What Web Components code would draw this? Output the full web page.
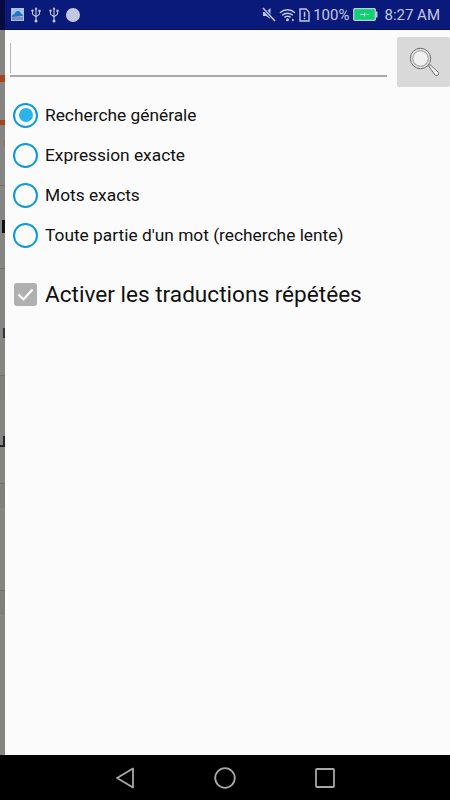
<!DOCTYPE html>
<html lang="fr">
<head>
<meta charset="utf-8">
<title>Recherche</title>
<style>
  html, body { margin: 0; padding: 0; }
  body { font-family: Roboto, "Noto Sans", sans-serif; }
</style>
</head>
<body>
<search-app>
  <radio-option checked>Recherche générale</radio-option>
  <radio-option>Expression exacte</radio-option>
  <radio-option>Mots exacts</radio-option>
  <radio-option>Toute partie d'un mot (recherche lente)</radio-option>
  <check-option slot="after" checked>Activer les traductions répétées</check-option>
</search-app>

<script>
// top bar with the android notification icons
class StatusBar extends HTMLElement {
  constructor() {
    super();
    const usb = `
      <svg class="usb" width="10" height="16" viewBox="0 0 10 16" fill="none" stroke="#c3c8e2" stroke-width="1.100">
        <path d="M5 1v14M1.500 4.500v2.200c0 1.300 3.500 2.300 3.500 3.600M8.500 4.500v2.200c0 1.300-3.500 2.300-3.500 3.600"/>
        <path d="M5 0 3.600 2.400h2.800z" fill="#c3c8e2" stroke="none"/>
        <circle cx="5" cy="14" r="1.500" fill="#c3c8e2" stroke="none"/>
        <circle cx="1.500" cy="3.800" r="1.200" fill="#c3c8e2" stroke="none"/>
        <rect x="7.400" y="2.700" width="2.200" height="2.200" fill="#c3c8e2" stroke="none"/>
      </svg>`;
    this.attachShadow({ mode: 'open' }).innerHTML = `
      <style>
        :host {
          display: flex;
          align-items: center;
          height: 29px;
          background: #0a1a7a;
          border-bottom: 1px solid #07125a;
          color: #c3c8e2;
          font-family: Roboto, sans-serif;
          font-size: 15px;
          flex: none;
        }
        .edge { width: 5px; align-self: stretch; background: #050d40; margin-bottom: -1px; }
        .left { display: flex; align-items: center; padding-left: 6px; }
        .usb { margin-left: 7px; }
        .usb + .usb { margin-left: 8px; }
        .dot { width: 14px; height: 14px; border-radius: 50%; background: #c3c8e2; margin-left: 7px; }
        .right { display: flex; align-items: center; margin-left: auto; padding-right: 10px; }
        .pct { margin-left: 3px; }
        .time { margin-left: 6px; }
        svg { display: block; }
      </style>
      <div class="edge"></div>
      <div class="left">
        <svg width="13" height="13" viewBox="0 0 13 13">
          <rect width="13" height="13" fill="#a9c0e0"/>
          <path d="M1 9c0-2 1-3 2.500-3 .5-2 2-3 3.500-3s2.800 1 3 2.700c1.200 0 2 1 2 2.300z" fill="#1c78c8"/>
          <rect x="1" y="9" width="11" height="3" fill="#7c8fb8"/>
        </svg>
        ${usb}
        ${usb}
        <div class="dot"></div>
      </div>
      <div class="right">
        <svg width="14" height="15" viewBox="0 0 14 15" fill="#c3c8e2">
          <path d="M1 5h3l4.500-4v11L4 9H1z"/>
          <path d="M1 1l12 13" stroke="#0a1a7a" stroke-width="3.200"/>
          <path d="M1 1l12 13" stroke="#c3c8e2" stroke-width="1.500"/>
        </svg>
        <svg width="17" height="14" viewBox="0 0 17 14" fill="none" stroke="#c3c8e2" stroke-width="1.500" style="margin-left:3px">
          <path d="M1 4.800C5.500.8 11.500.8 16 4.800M3.200 7.200c3-2.600 7.600-2.600 10.600 0M5.400 9.400c1.800-1.400 4.400-1.400 6.200 0"/>
          <circle cx="8.500" cy="11.800" r="1.500" fill="#c3c8e2" stroke="none"/>
          <path d="M13 10.500v3l2.500-1.500z" fill="#c3c8e2" stroke="none"/>
        </svg>
        <svg width="11" height="14" viewBox="0 0 11 14" style="margin-left:3px">
          <path d="M1 1h6l3 3v9H1z" fill="none" stroke="#c3c8e2" stroke-width="1.400"/>
          <path d="M4.800 3.800h1.500v5H4.800zM4.800 9.800h1.500v1.500H4.800z" fill="#c3c8e2"/>
        </svg>
        <span class="pct">100%</span>
        <svg width="25" height="13" viewBox="0 0 25 13" style="margin-left:4px">
          <rect x=".7" y=".7" width="21.600" height="11.600" rx="1" fill="#0fd070" stroke="#c3c8e2" stroke-width="1.300"/>
          <rect x="23" y="3.500" width="1.500" height="6" fill="#c3c8e2"/>
          <path d="M7 6h4l1-2v2.400h4v.6h-4l-1 2V7H7z" fill="#e8fff2"/>
        </svg>
        <span class="time">8:27 AM</span>
      </div>
    `;
  }
}
customElements.define('status-bar', StatusBar);

// sliver of the page behind the drawer, dimmed
class DrawerEdge extends HTMLElement {
  constructor() {
    super();
    const marks = [
      [0, 75, 82, '#a5451a'], [0, 120, 125, '#a5451a'], [3, 140, 146, '#94755f'],
      [0, 185, 186, '#6f6f6d'], [2, 220, 233, '#111'], [0, 268, 269, '#6f6f6d'],
      [3, 328, 338, '#333'], [0, 375, 400, '#7f7f7c'], [0, 375, 376, '#6f6f6d'],
      [3, 436, 445, '#222'], [0, 445, 447, '#222'],
      [0, 483, 508, '#7f7f7c'], [0, 483, 484, '#6f6f6d'],
      [0, 590, 615, '#7f7f7c'], [0, 590, 591, '#6f6f6d']
    ].map(m => `<i style="left:${m[0]}px;height:${m[2] - m[1]}px;top:${m[1] - 30}px;background:${m[3]}"></i>`).join('');
    this.attachShadow({ mode: 'open' }).innerHTML = `
      <style>
        :host {
          display: block;
          position: relative;
          width: 5px;
          flex: none;
          background: #858583;
          overflow: hidden;
        }
        i { position: absolute; right: 0; }
      </style>
      ${marks}
    `;
  }
}
customElements.define('drawer-edge', DrawerEdge);

class SearchRow extends HTMLElement {
  constructor() {
    super();
    this.attachShadow({ mode: 'open' }).innerHTML = `
      <style>
        :host {
          display: flex;
          align-items: flex-start;
          padding: 7px 0 0 5px;
        }
        .wrap { flex: 1; }
        .field {
          height: 30px;
          margin-top: 6px;
          border-left: 1.500px solid #b5b5b5;
        }
        .field input {
          display: block;
          width: 100%;
          height: 30px;
          border: 0;
          padding: 0;
          background: transparent;
          outline: none;
          font: 16px Roboto, sans-serif;
        }
        .line { height: 2px; background: #a9a9a9; margin-top: 2px; }
        button {
          flex: none;
          width: 53px;
          height: 50px;
          margin-left: 10px;
          padding: 0;
          border: 0;
          border-radius: 2px;
          background: #d8d9d8;
          display: flex;
          align-items: center;
          justify-content: center;
        }
        svg { display: block; }
      </style>
      <div class="wrap">
        <div class="field"><input type="text" aria-label="Recherche"></div>
        <div class="line"></div>
      </div>
      <button aria-label="Rechercher">
        <svg width="32" height="32" viewBox="0 0 32 32" fill="none">
          <circle cx="12.500" cy="12.500" r="10.200" stroke="#6a6a6a" stroke-width="1" fill="#e6e6e6"/>
          <circle cx="12.500" cy="12.500" r="7.800" stroke="#7a7a7a" stroke-width=".8" fill="#f0f0f0"/>
          <path d="M20.500 19.800 22 18.600 30 26c1 1 .8 2.200 0 3s-2 1-3 0z" fill="#f4f4f4" stroke="#6a6a6a" stroke-width="1"/>
        </svg>
      </button>
    `;
  }
}
customElements.define('search-row', SearchRow);

class RadioOption extends HTMLElement {
  constructor() {
    super();
    this.attachShadow({ mode: 'open' }).innerHTML = `
      <style>
        :host {
          display: flex;
          align-items: center;
          height: 40px;
          color: #111;
          font-family: Roboto, sans-serif;
          font-size: 17.33px;
        }
        .ring {
          flex: none;
          width: 25px;
          height: 25px;
          box-sizing: border-box;
          border: 2.500px solid #0a9bd6;
          border-radius: 50%;
          margin-right: 7px;
          display: flex;
          align-items: center;
          justify-content: center;
        }
        :host([checked]) .ring::after {
          content: "";
          width: 14px;
          height: 14px;
          border-radius: 50%;
          background: #2cb3ea;
        }
      </style>
      <div class="ring"></div>
      <slot></slot>
    `;
  }
}
customElements.define('radio-option', RadioOption);

class CheckOption extends HTMLElement {
  constructor() {
    super();
    this.attachShadow({ mode: 'open' }).innerHTML = `
      <style>
        :host {
          display: flex;
          align-items: center;
          height: 40px;
          color: #111;
          font-family: Roboto, sans-serif;
          font-size: 22.6px;
        }
        svg { flex: none; display: block; margin: 0 8px 0 1px; }
      </style>
      <svg width="23" height="23" viewBox="0 0 23 23">
        <rect width="23" height="23" rx="3" fill="#b0b0b0"/>
        <path d="M4.500 11.500 9.500 16.500 18.500 6.500" fill="none" stroke="#fff" stroke-width="2.200"/>
      </svg>
      <slot></slot>
    `;
  }
}
customElements.define('check-option', CheckOption);

class NavBar extends HTMLElement {
  constructor() {
    super();
    this.attachShadow({ mode: 'open' }).innerHTML = `
      <style>
        :host {
          display: flex;
          align-items: center;
          justify-content: center;
          gap: 79px;
          height: 45px;
          background: #000;
          flex: none;
        }
        svg { display: block; }
      </style>
      <svg width="20" height="22" viewBox="0 0 20 22" fill="none" stroke="#a8a8a8" stroke-width="1.800" stroke-linejoin="round">
        <path d="M18 1.500v19L2 11z"/>
      </svg>
      <svg width="22" height="22" viewBox="0 0 22 22" fill="none" stroke="#a8a8a8" stroke-width="1.800">
        <circle cx="11" cy="11" r="9.800"/>
      </svg>
      <svg width="20" height="20" viewBox="0 0 20 20" fill="none" stroke="#a8a8a8" stroke-width="1.800">
        <rect x="1" y="1" width="18" height="18" rx="1"/>
      </svg>
    `;
  }
}
customElements.define('nav-bar', NavBar);

class SearchApp extends HTMLElement {
  constructor() {
    super();
    this.attachShadow({ mode: 'open' }).innerHTML = `
      <style>
        :host {
          display: flex;
          flex-direction: column;
          width: 450px;
          height: 800px;
          overflow: hidden;
        }
        .body { flex: 1; display: flex; min-height: 0; }
        .panel { flex: 1; background: #fbfbfb; min-width: 0; }
        .options { padding: 8px 0 0 8px; }
        .after { padding: 19px 0 0 8px; }
      </style>
      <status-bar></status-bar>
      <div class="body">
        <drawer-edge></drawer-edge>
        <div class="panel">
          <search-row></search-row>
          <div class="options"><slot></slot></div>
          <div class="after"><slot name="after"></slot></div>
        </div>
      </div>
      <nav-bar></nav-bar>
    `;
  }
}
customElements.define('search-app', SearchApp);
</script>
</body>
</html>
